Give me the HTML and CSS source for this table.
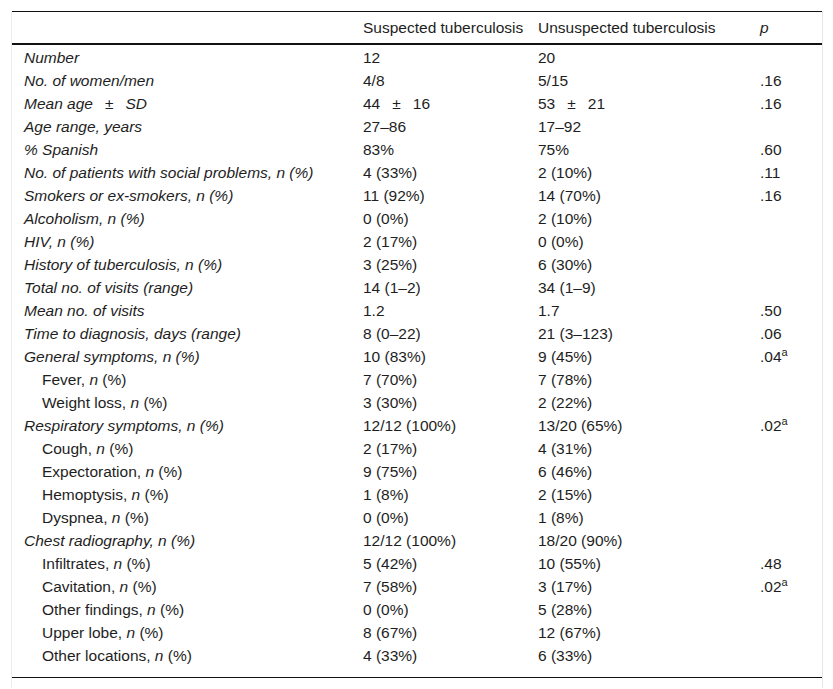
FILE: index.html
```html
<!DOCTYPE html>
<html lang="en">
<head>
<meta charset="utf-8">
<title>Table</title>
<link rel="stylesheet" href="styles.css">
</head>
<body>
<div class="frame">
<table class="tbl">
<colgroup><col class="c1"><col class="c2"><col class="c3"><col class="c4"></colgroup>
<thead>
<tr><th></th><th>Suspected tuberculosis</th><th>Unsuspected tuberculosis</th><th><i>p</i></th></tr>
</thead>
<tbody>
<tr><td class="lab">Number</td><td>12</td><td>20</td><td></td></tr>
<tr><td class="lab">No. of women/men</td><td>4/8</td><td>5/15</td><td>.16</td></tr>
<tr><td class="lab">Mean age<span class="pm">±</span>SD</td><td>44<span class="pm">±</span>16</td><td>53<span class="pm">±</span>21</td><td>.16</td></tr>
<tr><td class="lab">Age range, years</td><td>27–86</td><td>17–92</td><td></td></tr>
<tr><td class="lab">% Spanish</td><td>83%</td><td>75%</td><td>.60</td></tr>
<tr><td class="lab">No. of patients with social problems, n (%)</td><td>4 (33%)</td><td>2 (10%)</td><td>.11</td></tr>
<tr><td class="lab">Smokers or ex-smokers, n (%)</td><td>11 (92%)</td><td>14 (70%)</td><td>.16</td></tr>
<tr><td class="lab">Alcoholism, n (%)</td><td>0 (0%)</td><td>2 (10%)</td><td></td></tr>
<tr><td class="lab">HIV, n (%)</td><td>2 (17%)</td><td>0 (0%)</td><td></td></tr>
<tr><td class="lab">History of tuberculosis, n (%)</td><td>3 (25%)</td><td>6 (30%)</td><td></td></tr>
<tr><td class="lab">Total no. of visits (range)</td><td>14 (1–2)</td><td>34 (1–9)</td><td></td></tr>
<tr><td class="lab">Mean no. of visits</td><td>1.2</td><td>1.7</td><td>.50</td></tr>
<tr><td class="lab">Time to diagnosis, days (range)</td><td>8 (0–22)</td><td>21 (3–123)</td><td>.06</td></tr>
<tr><td class="lab">General symptoms, n (%)</td><td>10 (83%)</td><td>9 (45%)</td><td>.04<sup>a</sup></td></tr>
<tr><td class="sub">Fever, <i>n</i> (%)</td><td>7 (70%)</td><td>7 (78%)</td><td></td></tr>
<tr><td class="sub">Weight loss, <i>n</i> (%)</td><td>3 (30%)</td><td>2 (22%)</td><td></td></tr>
<tr><td class="lab">Respiratory symptoms, n (%)</td><td>12/12 (100%)</td><td>13/20 (65%)</td><td>.02<sup>a</sup></td></tr>
<tr><td class="sub">Cough, <i>n</i> (%)</td><td>2 (17%)</td><td>4 (31%)</td><td></td></tr>
<tr><td class="sub">Expectoration, <i>n</i> (%)</td><td>9 (75%)</td><td>6 (46%)</td><td></td></tr>
<tr><td class="sub">Hemoptysis, <i>n</i> (%)</td><td>1 (8%)</td><td>2 (15%)</td><td></td></tr>
<tr><td class="sub">Dyspnea, <i>n</i> (%)</td><td>0 (0%)</td><td>1 (8%)</td><td></td></tr>
<tr><td class="lab">Chest radiography, n (%)</td><td>12/12 (100%)</td><td>18/20 (90%)</td><td></td></tr>
<tr><td class="sub">Infiltrates, <i>n</i> (%)</td><td>5 (42%)</td><td>10 (55%)</td><td>.48</td></tr>
<tr><td class="sub">Cavitation, <i>n</i> (%)</td><td>7 (58%)</td><td>3 (17%)</td><td>.02<sup>a</sup></td></tr>
<tr><td class="sub">Other findings, <i>n</i> (%)</td><td>0 (0%)</td><td>5 (28%)</td><td></td></tr>
<tr><td class="sub">Upper lobe, <i>n</i> (%)</td><td>8 (67%)</td><td>12 (67%)</td><td></td></tr>
<tr class="last"><td class="sub">Other locations, <i>n</i> (%)</td><td>4 (33%)</td><td>6 (33%)</td><td></td></tr>
</tbody>
</table>
</div>
</body>
</html>
```

FILE: styles.css
```css
html, body {
  margin: 0;
  padding: 0;
  background: #fff;
}
body {
  font-family: "Liberation Sans", Arial, sans-serif;
  font-size: 15.5px;
  color: #1e1e1e;
}
.frame {
  margin: 11px 0 0 11px;
  width: 810px;
  border-left: 1px solid #ececec;
  border-right: 1px solid #e6e6e6;
  padding-bottom: 10px;
}
.tbl {
  width: 100%;
  border-collapse: collapse;
  table-layout: fixed;
  border-top: 1px solid #111;
  border-bottom: 1px solid #111;
}
.c1 { width: 339px; }
.c2 { width: 175px; }
.c3 { width: 222px; }
.c4 { width: 74px; }
.tbl th {
  font-weight: normal;
  text-align: left;
  padding: 8px 12px 7px 12px;
  line-height: 16px;
  border-bottom: 2px solid #111;
  white-space: nowrap;
}
.tbl td {
  padding: 5px 12px 2px 12px;
  line-height: 16px;
  white-space: nowrap;
  vertical-align: top;
}
.tbl tr.last td {
  padding-bottom: 13px;
}
.tbl td.lab {
  font-style: italic;
}
.tbl td.sub {
  padding-left: 30px;
}
.pm {
  margin: 0 12px;
}
sup {
  font-size: 11px;
  line-height: 0;
  vertical-align: 6px;
}
```
